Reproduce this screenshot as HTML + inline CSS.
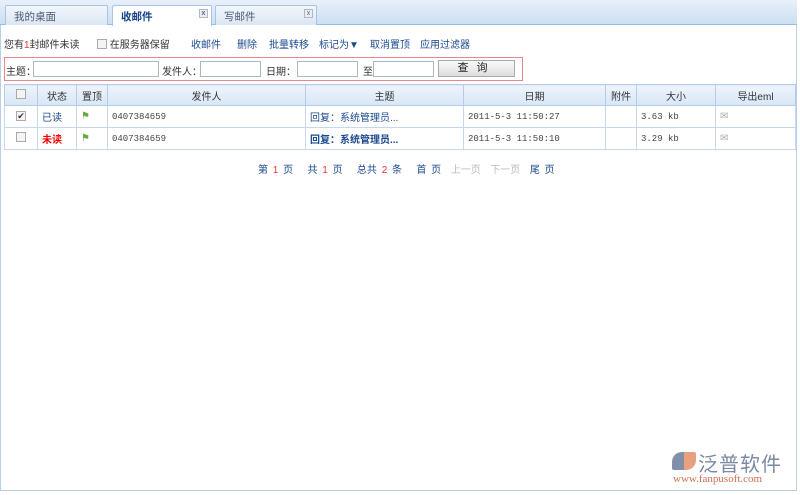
<!DOCTYPE html>
<html><head><meta charset="utf-8"><style>
*{margin:0;padding:0;box-sizing:border-box}
body{width:800px;height:495px;background:#fff;font-family:"Liberation Sans","Noto Sans CJK SC",sans-serif;font-size:11px;color:#333;position:relative;overflow:hidden}
.frame{position:absolute;left:0;top:0;width:797px;height:491px;border:1px solid #b8cfe8;border-top:none}
.tabbar{position:absolute;left:0;top:0;width:797px;height:25px;background:linear-gradient(#e8f0fa,#cddff3);border-bottom:1px solid #99bbe8}
.tab{position:absolute;top:5px;height:20px;border:1px solid #a9c4e6;border-bottom:none;background:linear-gradient(#f2f6fb,#dbe6f4);padding:3px 0 0 8px;color:#4a5a70;border-radius:2px 2px 0 0;font-size:10.5px}
.tab.act{background:#fff;font-weight:bold;color:#15428b;height:21px}
.x{position:absolute;right:3px;top:3px;width:9px;height:9px;border:1px solid #b0b8c8;background:#e8eef6;font-size:7px;line-height:7px;text-align:center;color:#667}
.tb{position:absolute;top:36px;font-size:10px;color:#1c4a8e}
.filter{position:absolute;left:4px;top:57px;width:519px;height:24px;border:1px solid #e88888}
.lbl{position:absolute;top:5px;font-size:10px;color:#333}
.inp{position:absolute;top:3px;height:16px;border:1px solid #a8b8c8;background:#fff}
.btn{position:absolute;left:433px;top:2px;width:77px;height:17px;border:1px solid #aaa;background:linear-gradient(#fafafa,#ddd);text-align:center;font-size:11px;line-height:15px;letter-spacing:8px;color:#222}
table{position:absolute;left:4px;top:84px;width:792px;border-collapse:collapse;font-size:10px}
th{height:21px;background:linear-gradient(#eef4fc,#d8e6f6);border:1px solid #b6cbe6;font-weight:normal;color:#333}
td{height:22px;border:1px solid #c6d8ee;padding-left:4px}
.mono{font-family:"Liberation Mono",monospace;font-size:9px;color:#444}
.cb{display:inline-block;width:10px;height:10px;border:1px solid #aaa;background:#f4f4f4;font-size:9px;line-height:8px;text-align:center}
.pg{position:absolute;top:161px;left:258px;font-size:10px;color:#1c4a8e;word-spacing:2px}
.r{color:#e33}.g{color:#bbb}
</style></head><body>
<div class="frame"></div>
<div class="tabbar">
<div class="tab" style="left:5px;width:103px">我的桌面</div>
<div class="tab act" style="left:112px;width:100px">收邮件<span class="x">x</span></div>
<div class="tab" style="left:215px;width:102px">写邮件<span class="x">x</span></div>
</div>
<div class="tb" style="left:4px;color:#333">您有<span class="r">1</span>封邮件未读</div>
<div class="tb" style="left:97px;color:#333"><span class="cb" style="vertical-align:-1px"></span> 在服务器保留</div>
<div class="tb" style="left:191px">收邮件</div>
<div class="tb" style="left:237px">删除</div>
<div class="tb" style="left:269px">批量转移</div>
<div class="tb" style="left:319px">标记为▼</div>
<div class="tb" style="left:370px">取消置顶</div>
<div class="tb" style="left:420px">应用过滤器</div>
<div class="filter">
<span class="lbl" style="left:1px">主题：</span><span class="inp" style="left:28px;width:126px"></span>
<span class="lbl" style="left:157px">发件人：</span><span class="inp" style="left:195px;width:61px"></span>
<span class="lbl" style="left:261px">日期：</span><span class="inp" style="left:292px;width:61px"></span>
<span class="lbl" style="left:358px">至</span><span class="inp" style="left:368px;width:61px"></span>
<div class="btn">查询</div>
</div>
<table>
<tr><th style="width:33px"><span class="cb"></span></th><th style="width:39px">状态</th><th style="width:31px">置顶</th><th style="width:198px">发件人</th><th style="width:158px">主题</th><th style="width:142px">日期</th><th style="width:31px">附件</th><th style="width:79px">大小</th><th>导出eml</th></tr>
<tr><td style="text-align:center;padding:0"><span class="cb">✔</span></td><td style="color:#1c4a8e">已读</td><td style="color:#6a4">&#9873;</td><td class="mono">0407384659</td><td style="color:#1c4a8e">回复：系统管理员...</td><td class="mono">2011-5-3 11:50:27</td><td></td><td class="mono">3.63 kb</td><td style="color:#aaa">✉</td></tr>
<tr><td style="text-align:center;padding:0"><span class="cb"></span></td><td style="color:#e00;font-weight:bold">未读</td><td style="color:#6a4">&#9873;</td><td class="mono">0407384659</td><td style="color:#1c4a8e;font-weight:bold">回复：系统管理员...</td><td class="mono">2011-5-3 11:50:10</td><td></td><td class="mono">3.29 kb</td><td style="color:#aaa">✉</td></tr>
</table>
<div class="pg">第 <span class="r">1</span> 页 &nbsp; 共 <span class="r">1</span> 页 &nbsp; 总共 <span class="r">2</span> 条 &nbsp; 首 页 &nbsp;<span class="g">上一页</span> &nbsp;<span class="g">下一页</span> &nbsp;尾 页</div>
<div style="position:absolute;left:672px;top:452px;width:24px;height:18px;background:linear-gradient(90deg,#8090a8 50%,#e8a080 50%);border-radius:10px 2px 10px 2px"></div>
<div style="position:absolute;left:698px;top:448px;font-size:20px;color:#7a8aa4;letter-spacing:1px">泛普软件</div>
<div style="position:absolute;left:673px;top:473px;font-family:'Liberation Serif',serif;font-size:11px;color:#d07050">www.fanpusoft.com</div>
</body></html>
